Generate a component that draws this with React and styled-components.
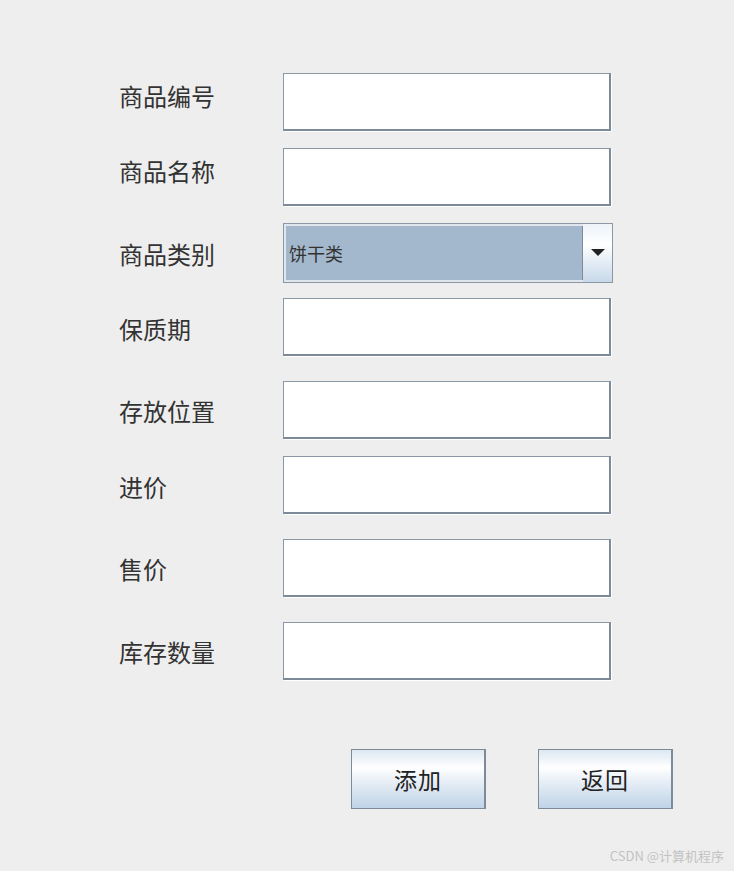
import React from "react";
import styled, { createGlobalStyle } from "styled-components";

const Global = createGlobalStyle`
  html, body { margin: 0; padding: 0; background: #eeeeee; }
  body { font-family: "Noto Sans CJK SC", "Noto Sans", sans-serif; }
`;

const Page = styled.div`
  position: relative;
  width: 734px;
  height: 871px;
  background: #eeeeee;
  box-sizing: border-box;
  padding: 73px 0 0 119px;
  display: flex;
  flex-direction: column;
`;

const Row = styled.div`
  display: flex;
  align-items: center;
  margin-top: ${(p) => p.$gap}px;
`;

const Label = styled.div`
  width: 164px;
  font-size: 24px;
  color: #333333;
  position: relative;
  top: ${(p) => p.$shift || 0}px;
`;

const Field = styled.div`
  width: 328px;
  height: 58px;
  box-sizing: border-box;
  background: #ffffff;
  border-top: 1px solid #8a97a4;
  border-left: 1px solid #8a97a4;
  border-right: 2px solid #7d8a97;
  border-bottom: 2px solid #7d8a97;
  box-shadow: 1px 1px 0 #ffffff;
`;

const Combo = styled.div`
  width: 330px;
  height: 60px;
  box-sizing: border-box;
  border: 1px solid #8a97a4;
  display: flex;
  background: #dfe6ee;
`;

const ComboValue = styled.div`
  flex: 1;
  margin: 2px 0 2px 2px;
  background: #a3b8cc;
  display: flex;
  align-items: center;
  padding-left: 3px;
  font-size: 18px;
  color: #333333;
  border-right: 1px solid #7d8a97;
`;

const ArrowButton = styled.div`
  width: 29px;
  background: linear-gradient(#eef3f9 0%, #ffffff 35%, #c7d8ea 100%);
  display: flex;
  align-items: center;
  justify-content: center;
`;

const Buttons = styled.div`
  display: flex;
  gap: 52px;
  margin-top: 69px;
  margin-left: 232px;
`;

const Button = styled.div`
  width: 135px;
  height: 60px;
  box-sizing: border-box;
  border: 1px solid #7d8a97;
  border-right-width: 2px;
  background: linear-gradient(#dde7f2 0%, #ffffff 30%, #e7eef6 55%, #bfd3e8 100%);
  display: flex;
  align-items: center;
  justify-content: center;
  font-size: 23px;
  color: #222222;
  letter-spacing: 1px;
`;

const Watermark = styled.div`
  position: absolute;
  right: 10px;
  bottom: 6px;
  font-family: "Noto Sans CJK SC", sans-serif;
  font-size: 13px;
  color: #c3c3c3;
`;

const rows = [
  { label: "商品编号", gap: 0, shift: -7 },
  { label: "商品名称", gap: 17, shift: -7 },
  { label: "商品类别", gap: 17, combo: true, shift: 0 },
  { label: "保质期", gap: 15, shift: 1 },
  { label: "存放位置", gap: 25, shift: 0 },
  { label: "进价", gap: 17, shift: 1 },
  { label: "售价", gap: 25, shift: 0 },
  { label: "库存数量", gap: 25, shift: 0 },
];

export default function App() {
  return (
    <>
      <Global />
      <Page>
        {rows.map((r) => (
          <Row key={r.label} $gap={r.gap}>
            <Label $shift={r.shift}>{r.label}</Label>
            {r.combo ? (
              <Combo>
                <ComboValue>饼干类</ComboValue>
                <ArrowButton>
                  <svg width="14" height="8" viewBox="0 0 14 8">
                    <polygon points="0,0 14,0 7,7" fill="#222" />
                  </svg>
                </ArrowButton>
              </Combo>
            ) : (
              <Field />
            )}
          </Row>
        ))}
        <Buttons>
          <Button>添加</Button>
          <Button>返回</Button>
        </Buttons>
        <Watermark>CSDN @计算机程序</Watermark>
      </Page>
    </>
  );
}
